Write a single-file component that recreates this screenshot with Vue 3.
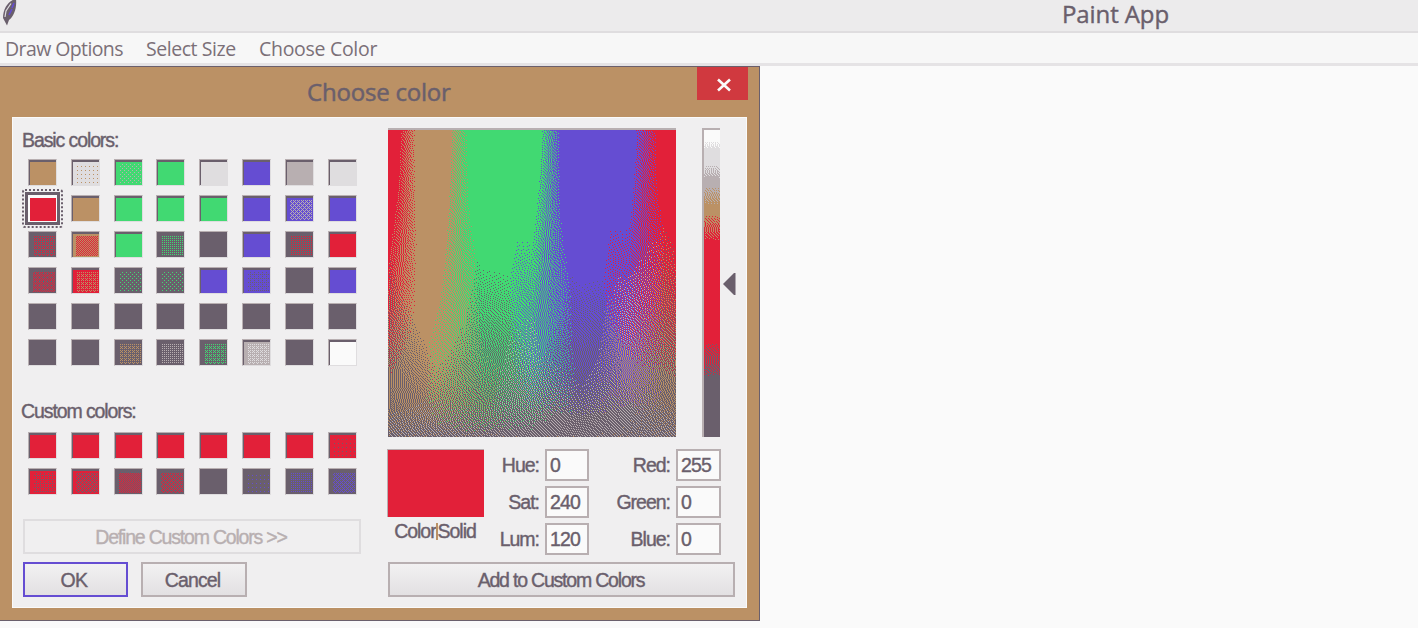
<script setup>
const menus = ['Draw Options', 'Select Size', 'Choose Color']

const tones = {
  R: [226, 32, 57], T: [187, 145, 101], G: [65, 217, 114], V: [101, 77, 210],
  D: [106, 95, 108], M: [184, 175, 177], L: [223, 221, 223], W: [250, 250, 250]
}
const palette = Object.values(tones)

// Each swatch: base tone, optional speck tone, specks per sixteen pixels
const basic = [
  'T', 'LT1', 'GM2', 'G', 'L', 'V', 'M', 'L',
  'R', 'T', 'G', 'G', 'G', 'V', 'VM6', 'V',
  'DR5', 'TR8', 'G', 'DG4', 'D', 'V', 'DR4', 'R',
  'DR7', 'RT5', 'DG2', 'DG2', 'V', 'VD3', 'D', 'V',
  'D', 'D', 'D', 'D', 'D', 'D', 'D', 'D',
  'D', 'D', 'DT5', 'DM4', 'DG5', 'ML5', 'D', 'W'
]
const custom = [
  'R', 'R', 'R', 'R', 'R', 'R', 'R', 'RD1',
  'RD3', 'RD6', 'DR8', 'DR6', 'D', 'DV1', 'DV4', 'DV6'
]
const fields = [
  { name: 'Hue:', value: '0', name2: 'Red:', value2: '255' },
  { name: 'Sat:', value: '240', name2: 'Green:', value2: '0' },
  { name: 'Lum:', value: '120', name2: 'Blue:', value2: '0' }
]

function hsl(h, s, l) {
  const a = s * Math.min(l, 1 - l)
  return [0, 8, 4].map(n => {
    const k = (n + h * 12) % 12
    return 255 * (l - a * Math.max(-1, Math.min(k - 3, 9 - k, 1)))
  })
}
const spectrum = { strength: 0.72, color: (x, y) => hsl(Math.min(x, 0.9999), 1 - y, 0.5) }
const ramp = { strength: 0.45, color: (x, y) => hsl(0, 1, 1 - y) }

// Error diffusion onto the eight-colour display palette
function dither(el, { color, strength }) {
  const w = el.width
  const h = el.height
  const ctx = el.getContext('2d')
  const out = ctx.createImageData(w, h)
  const buf = []
  for (let y = 0; y < h; y++) for (let x = 0; x < w; x++) buf.push(color(x / w, y / h).slice())
  const spread = (x, y, err, f) => {
    if (x < 0 || x >= w || y >= h) return
    const p = buf[y * w + x]
    for (let i = 0; i < 3; i++) p[i] = Math.max(0, Math.min(255, p[i] + err[i] * f * strength))
  }
  for (let y = 0; y < h; y++) {
    for (let x = 0; x < w; x++) {
      const p = buf[y * w + x]
      let best = palette[0]
      let min = Infinity
      for (const q of palette) {
        const d = (p[0] - q[0]) ** 2 + (p[1] - q[1]) ** 2 + (p[2] - q[2]) ** 2
        if (d < min) { min = d; best = q }
      }
      const err = p.map((v, i) => v - best[i])
      spread(x + 1, y, err, 0.5)
      spread(x - 1, y + 1, err, 0.25)
      spread(x, y + 1, err, 0.25)
      out.data.set([...best, 255], (y * w + x) * 4)
    }
  }
  ctx.putImageData(out, 0, 0)
}

const bayer = [0, 8, 2, 10, 12, 4, 14, 6, 3, 11, 1, 9, 15, 7, 13, 5]
function fillSwatch(el, code) {
  const ctx = el.getContext('2d')
  const out = ctx.createImageData(el.width, el.height)
  const density = Number(code.slice(2))
  for (let y = 0; y < el.height; y++) {
    for (let x = 0; x < el.width; x++) {
      const inner = x > 2 && y > 1 && x < el.width - 1 && y < el.height - 1
      const speck = inner && bayer[(y % 4) * 4 + (x % 4)] < density
      out.data.set([...tones[speck ? code[1] : code[0]], 255], (y * el.width + x) * 4)
    }
  }
  ctx.putImageData(out, 0, 0)
}
const vDither = { mounted: (el, b) => dither(el, b.value) }
const vTone = { mounted: (el, b) => fillSwatch(el, b.value) }
</script>

<template>
  <div class="window">
    <header class="titlebar">
      <svg class="feather" width="18" height="27" viewBox="0 0 18 27">
        <path d="M16 -1C9 0 3 8 3 18L7 25.500L9 20C14 16 17 8 16 -1Z" fill="#6a5f6c" />
        <path d="M11 3.500L6 11L5 17" fill="none" stroke="#dfdddf" stroke-width="1.2" />
        <path d="M14 3L12 8M12 9L9 15" fill="none" stroke="#654dd2" stroke-width="1.6" />
      </svg>
      <h1>Paint App</h1>
    </header>
    <nav class="menubar">
      <span v-for="m in menus" :key="m">{{ m }}</span>
    </nav>
    <main class="canvas">
      <section class="dialog">
        <div class="caption">
          <h2>Choose color</h2>
          <button class="close">
            <svg width="16" height="14" viewBox="0 0 16 14"><path d="M2 1.5L14 12.5M14 1.5L2 12.5" stroke="#fafafa" stroke-width="2.6" /></svg>
          </button>
        </div>
        <div class="body">
          <div class="left">
            <div class="label">Basic colors:</div>
            <div class="grid">
              <div v-for="(c, i) in basic" :key="i" class="swatch" :class="{ selected: i === 8 }">
                <canvas v-tone="c" width="26" height="23"></canvas>
              </div>
            </div>
            <div class="label custom">Custom colors:</div>
            <div class="grid">
              <div v-for="(c, i) in custom" :key="i" class="swatch">
                <canvas v-tone="c" width="26" height="23"></canvas>
              </div>
            </div>
            <button class="btn define"><span>Define Custom Colors &gt;&gt;</span></button>
            <div class="actions">
              <button class="btn ok"><span>OK</span></button>
              <button class="btn"><span>Cancel</span></button>
            </div>
          </div>
          <div class="right">
            <div class="pickers">
              <canvas v-dither="spectrum" class="spectrum" width="288" height="307"></canvas>
              <canvas v-dither="ramp" class="ramp" width="16" height="307"></canvas>
              <svg class="arrow" width="13" height="22" viewBox="0 0 13 22"><path d="M0 11L11 0H12.500V22H11Z" fill="#6a5f6c" /></svg>
            </div>
            <div class="values">
              <div class="preview">
                <div class="chip"></div>
                <div class="chiplabel">Color<i></i>Solid</div>
              </div>
              <div class="fields">
                <template v-for="f in fields" :key="f.name">
                  <label>{{ f.name }}</label><div class="input">{{ f.value }}</div>
                  <label>{{ f.name2 }}</label><div class="input">{{ f.value2 }}</div>
                </template>
              </div>
            </div>
            <button class="btn add"><span>Add to Custom Colors</span></button>
          </div>
        </div>
      </section>
    </main>
  </div>
</template>

<style>
body { overflow: hidden; background: #fafafa; }
</style>

<style scoped>
* { box-sizing: border-box; }
.window { width: 1418px; height: 628px; background: #fafafa; color: #6a5f6c; font-family: "Liberation Sans", Arial, sans-serif; display: flex; flex-direction: column; }
.titlebar { height: 33px; flex: none; background: #ecebec; border-bottom: 2px solid #dfdddf; display: flex; justify-content: space-between; }
.titlebar h1 { margin: 0 249px 0 0; font: 400 24px/28px "Open Sans", "Noto Sans", sans-serif; letter-spacing: -0.1px; white-space: nowrap; -webkit-text-stroke: 0.4px; }
.menubar { height: 33px; flex: none; padding-left: 5px; background: #f7f7f7; border-bottom: 3px solid #e5e3e5; display: flex; gap: 23px; font: 400 19.500px/32px "Open Sans", "Noto Sans", sans-serif; color: #7b7078; white-space: nowrap; }
.menubar span:nth-child(1) { width: 118px; letter-spacing: -0.6px; }
.menubar span:nth-child(2) { width: 90px; letter-spacing: -0.45px; }
.menubar span:nth-child(3) { letter-spacing: -0.3px; }
.canvas { flex: 1; }
.dialog { width: 760px; height: 555px; padding: 0 12px 12px 12px; background: #bb9165; border: solid #6a5f6c; border-width: 1px 1px 1px 0; display: flex; flex-direction: column; }
.caption { height: 50px; flex: none; display: grid; grid-template-columns: 1fr auto; }
.caption h2 { margin: 0; padding-left: 295px; font: 400 24px/49px "Open Sans", "Noto Sans", sans-serif; letter-spacing: -0.2px; white-space: nowrap; -webkit-text-stroke: 0.5px; }
.close { width: 51px; height: 33px; border: 0; padding: 3px 0 0 2px; background: #d0393f; display: grid; place-items: center; margin-right: -1px; }
.body { flex: 1; background: #f0eff0; border: 1px solid #fafafa; display: grid; grid-template-columns: 375px 1fr; }
.left { padding: 11px 0 0 9px; }
.label { height: 30px; font-size: 19.500px; line-height: 23px; letter-spacing: -1.1px; white-space: nowrap; -webkit-text-stroke: 0.4px; }
.label.custom { margin-top: 34px; height: 32px; margin-left: -1px; }
.grid { display: grid; grid-template-columns: repeat(8, 29px); column-gap: 13.830px; row-gap: 9px; padding-left: 6px; }
.swatch { height: 27px; width: 29px; border: 1px solid #dfdddf; border-top-color: #b8afb1; border-left-color: #b8afb1; background: #6a5f6c; display: flex; align-items: flex-end; justify-content: flex-end; position: relative; }
.swatch canvas { display: block; }
.selected { background: #fafafa; border-color: #fafafa; outline: 3px solid #6a5f6c; }
.selected::after { content: ""; position: absolute; inset: -7px; border: 2px dotted #6a5f6c; border-radius: 3px; }
.btn { display: flex; align-items: center; justify-content: center; height: 35px; padding: 0; border: 2px solid #b8afb1; background: linear-gradient(#f2f1f2, #e2e0e2); color: #6a5f6c; font: 400 19.500px/24px "Liberation Sans", Arial, sans-serif; letter-spacing: -1.2px; white-space: nowrap; -webkit-text-stroke: 0.4px; }
.define { margin: 24px 0 0 1px; width: 338px; border-color: #dfdddf; background: #f0eff0; color: #b8afb1; }
.define span { margin-right: 2px; }
.actions { display: flex; gap: 13px; margin: 8px 0 0 1px; }
.actions .btn { width: 106px; letter-spacing: -0.9px; }
.actions .btn span { margin-right: 3px; }
.actions .ok { border-color: #654dd2; width: 105px; letter-spacing: -0.5px; }
.right { padding-top: 10px; }
.pickers { display: flex; align-items: flex-start; height: 321px; }
.spectrum { border-top: 2px solid #b8afb1; }
.ramp { margin-left: 26px; border-left: 2px solid #b8afb1; border-top: 2px solid #b8afb1; box-sizing: content-box; }
.spectrum { box-sizing: content-box; }
.arrow { margin: 145px 0 0 3px; }
.values { display: flex; height: 113px; -webkit-text-stroke: 0.4px; }
.preview { width: 96px; margin-left: -1px; }
.chip { width: 97px; height: 68px; background: #e22039; border-top: 1px solid #b8afb1; border-left: 1px solid #b8afb1; }
.chiplabel { display: flex; justify-content: center; font-size: 19.500px; line-height: 28px; letter-spacing: -1.05px; }
.chiplabel i { width: 2px; height: 17px; margin-top: 6px; background: #bb9165; }
.fields { display: grid; grid-template-columns: 56px 44px 87px 45px; grid-template-rows: 32px 32px 32px; row-gap: 5px; margin-left: 6px; }
.fields label { text-align: right; padding-right: 6px; font-size: 19.500px; line-height: 33px; letter-spacing: -1px; }
.fields .input { border: 2px solid #b8afb1; background: #fafafa; padding-left: 3px; font-size: 19.500px; line-height: 28px; letter-spacing: -0.8px; }
.add { width: 347px; }
.add span { margin-right: 1px; }
</style>
